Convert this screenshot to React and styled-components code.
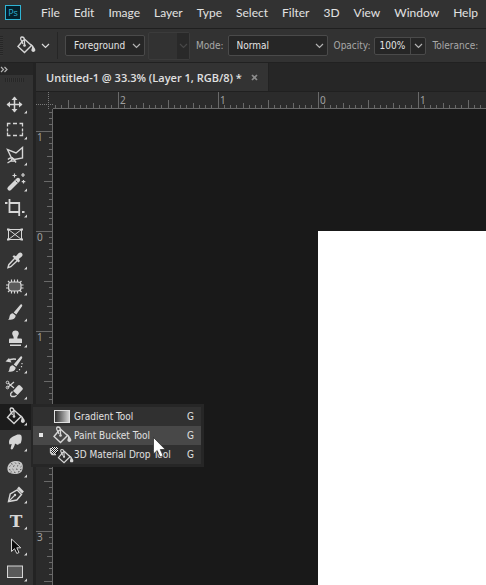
import React, { useEffect, useState } from "react";
import styled, { createGlobalStyle } from "styled-components";

const GlobalStyle = createGlobalStyle`
  * {
    box-sizing: border-box;
  }

  body {
    margin: 0;
    background: #191919;
    color: #dcdcdc;
    font-family: "DejaVu Sans Condensed", "Noto Sans", sans-serif;
    font-size: 10px;
  }

  button,
  input,
  select {
    margin: 0;
    padding: 0;
    border: none;
    background: none;
    color: inherit;
    font: inherit;
  }

  svg {
    display: block;
    flex: none;
  }
`;

const AppFrame = styled.div`
  display: flex;
  flex-direction: column;
  height: 100vh;
  overflow: hidden;
`;

const MenuBar = styled.nav`
  display: flex;
  align-items: center;
  flex: none;
  height: 29px;
  padding-left: 5px;
  background: #323232;
  border-bottom: 1px solid #1f1f1f;
`;

const Logo = styled.span`
  display: flex;
  align-items: center;
  justify-content: center;
  flex: none;
  width: 16px;
  height: 15px;
  margin-right: 20px;
  margin-bottom: 3px;
  border: 1px solid #2fb4d4;
  background: #04202c;
  color: #2fb4d4;
  font-family: "Open Sans", sans-serif;
  font-size: 9px;
  line-height: 12px;
`;

const MenuItems = styled.div`
  display: flex;
  gap: 14px;
  margin-bottom: 3px;
`;

const MenuItem = styled.button`
  color: #e2e2e2;
  font-family: Lato, "Open Sans", sans-serif;
  font-size: 12px;
  line-height: 18px;
  white-space: nowrap;
`;

const OptionsBar = styled.div`
  display: flex;
  align-items: center;
  flex: none;
  height: 34px;
  background: #323232;
  border-bottom: 1px solid #212121;
  white-space: nowrap;
`;

const Grip = styled.span`
  flex: none;
  width: 3px;
  height: 20px;
  margin-right: 13px;
  background: repeating-linear-gradient(#262626 0 1px, #363636 1px 2px);
`;

const ToolPreset = styled.button`
  display: flex;
  align-items: center;
  gap: 5px;
  flex: none;
  width: 42px;
  height: 27px;
  border-right: 1px solid #262626;
`;

const SelectBox = styled.span`
  position: relative;
  display: flex;
  flex: none;
  width: ${(props) => props.$width}px;
  height: 21px;
  margin-left: ${(props) => props.$gap}px;
  border: 1px solid #4a4a4a;
  border-radius: 2px;
  background: #262626;
`;

const Select = styled.select`
  appearance: none;
  width: 100%;
  padding-left: 8px;
  color: #e4e4e4;
`;

const SelectArrow = styled.span`
  position: absolute;
  right: 3px;
  top: 7px;
  color: #b4b4b4;
  pointer-events: none;
`;

const PatternPicker = styled.button`
  display: flex;
  justify-content: flex-end;
  flex: none;
  width: 42px;
  height: 28px;
  margin-left: 3px;
  border: 1px solid #3b3b3b;
  border-radius: 2px;
  color: #484848;
`;

const PatternArrow = styled.span`
  display: flex;
  align-items: center;
  justify-content: center;
  width: 12px;
  background: #292929;
`;

const OptionLabel = styled.label`
  margin-left: 6px;
  color: #a8a8a8;
`;

const NumberBox = styled.span`
  display: flex;
  flex: none;
  width: 52px;
  height: 18px;
  margin-left: 4px;
  border: 1px solid #4a4a4a;
  border-radius: 2px;
  background: #262626;
`;

const NumberInput = styled.input`
  width: 35px;
  padding-left: 4px;
  color: #e4e4e4;
`;

const NumberButton = styled.button`
  display: flex;
  align-items: center;
  justify-content: center;
  flex: 1;
  border-left: 1px solid #4a4a4a;
  color: #b4b4b4;
`;

const Workspace = styled.div`
  display: flex;
  flex: 1;
  min-height: 0;
`;

const Toolbar = styled.aside`
  flex: none;
  width: 36px;
  background: #333333;
  border-right: 3px solid #232323;
`;

const ToolbarHeader = styled.button`
  display: flex;
  align-items: center;
  width: 100%;
  height: 12px;
  background: #262626;
  color: #b4b4b4;
`;

const ToolbarGrip = styled.div`
  width: 19px;
  height: 4px;
  margin: 3px 0 10px 5px;
  background: repeating-linear-gradient(90deg, #272727 0 1px, #363636 1px 2px);
`;

const ToolSlot = styled.div`
  position: relative;
`;

const ToolButton = styled.button`
  display: block;
  width: 100%;
  height: 26px;
  background: ${(props) => (props.$active ? "#1c1c1c" : "transparent")};
`;

const Flyout = styled.div`
  position: absolute;
  z-index: 2;
  left: 31px;
  top: 0;
  width: 173px;
  padding: 3px 3px 3px 2px;
  background: #262626;
`;

const FlyoutItem = styled.button`
  display: flex;
  align-items: center;
  width: 100%;
  height: 19px;
  padding-right: 7px;
  background: ${(props) => (props.$active ? "#484848" : "#303030")};
  color: #e0e0e0;
  text-align: left;
  white-space: nowrap;
`;

const FlyoutMark = styled.span`
  width: 4px;
  height: 4px;
  margin: 0 9px 2px 6px;
  background: ${(props) => (props.$active ? "#e6e6e6" : "transparent")};
`;

const FlyoutName = styled.span`
  flex: 1;
  margin-left: 2px;
`;

const Cursor = styled.svg`
  position: absolute;
  left: 121px;
  top: 32px;
`;

const Editor = styled.main`
  display: flex;
  flex-direction: column;
  flex: 1;
  min-width: 0;
`;

const TabBar = styled.div`
  display: flex;
  flex: none;
  height: 29px;
  background: #262626;
  border-bottom: 1px solid #202020;
`;

const Tab = styled.div`
  display: flex;
  align-items: center;
  gap: 9px;
  padding: 0 10px;
  background: #333333;
  border-right: 1px solid #222222;
  white-space: nowrap;
`;

const TabTitle = styled.span`
  color: #e0e0e0;
  font-family: "Open Sans", sans-serif;
  font-size: 11px;
  font-weight: 600;
`;

const CloseButton = styled.button`
  color: #8c8c8c;
`;

const RulerRow = styled.div`
  display: flex;
  flex: none;
  height: 17px;
`;

const TopRuler = styled.svg`
  flex: 1;
  min-width: 0;
  height: 17px;
  background: #2b2b2b;
  border-bottom: 1px solid #696969;
`;

const RulerCorner = styled.svg`
  background: #2b2b2b;
`;

const CanvasRow = styled.div`
  display: flex;
  flex: 1;
  min-height: 0;
`;

const SideRuler = styled.svg`
  width: 17px;
  height: 100%;
  background: #2b2b2b;
  border-right: 1px solid #696969;
`;

const Canvas = styled.div`
  display: flex;
  flex: 1;
  padding: 122px 0 0 265px;
  background: #191919;
`;

const Page = styled.div`
  flex: 1;
  background: #ffffff;
`;

const RulerText = styled.text`
  fill: #a0a0a0;
  font-family: "Noto Sans", sans-serif;
  font-size: 10px;
`;

const menus = [
  "File",
  "Edit",
  "Image",
  "Layer",
  "Type",
  "Select",
  "Filter",
  "3D",
  "View",
  "Window",
  "Help",
];

const ink = "#d6d6d6";

const Chevron = () => (
  <svg width="9" height="6" viewBox="0 0 9 6" fill="none" stroke="currentColor" strokeWidth="1.2">
    <path d="M1 1l3.5 3.5L8 1" />
  </svg>
);

// Every tool drawing uses the 33x26 area of its button
const BucketShape = () => (
  <g>
    <path d="M12.5 7.5L7.5 13.5l6.5 6L21 12.5l-6.5-6z" fill="none" stroke={ink} strokeWidth="1.4" />
    <path
      d="M14 13V7.5C14 5 12.8 4 11.5 4S9.8 5.2 10.5 6.8L12.5 11"
      fill="none"
      stroke={ink}
      strokeWidth="1.3"
    />
    <circle cx="14" cy="12.5" r="1.3" fill={ink} />
    <path
      d="M18.5 10.5c3 .5 4.500 2 4.800 3.500 1.200 1.500 1.700 2.500 1.500 3.600-.4 1.900-3.600 1.900-3.900 0-.2-1.200.6-2 .6-3.100 0-1.400-1-2.500-3-4z"
      fill={ink}
    />
  </g>
);

const BrushShape = () => (
  <g fill={ink}>
    <path d="M21.8 4.5c.7.5.5 1.200.1 2l-5.600 8-2.600-2 6.200-7.300c.6-.7 1.200-1.100 1.900-.7z" />
    <path d="M12.9 13.3l2.700 2.100c.2 3-2.800 4.600-7.600 4.300 1.600-1 1.100-2.200 1.700-4 .5-1.600 1.800-2.500 3.200-2.400z" />
  </g>
);

const tools = [
  {
    name: "Move Tool",
    art: (
      <g stroke={ink} fill={ink}>
        <path d="M7.500 12.500h14M14.500 5.500v14" strokeWidth="1.500" />
        <path
          d="M14.500 4.500l3 3.500h-6zM14.500 20.500l3-3.500h-6zM6.500 12.500l3.500-3v6zM22.500 12.500l-3.500-3v6z"
          stroke="none"
        />
      </g>
    ),
  },
  {
    name: "Rectangular Marquee Tool",
    art: (
      <path
        d="M7.500 8.500v-3h3M13 5.500h4M19.500 5.500h3v3M22.500 10.500v3M22.500 14.500v3h-3M17 17.500h-4M10.500 17.500h-3v-3M7.500 13.500v-3"
        fill="none"
        stroke={ink}
        strokeWidth="1.300"
      />
    ),
  },
  {
    name: "Polygonal Lasso Tool",
    art: (
      <g fill="none" stroke={ink} strokeWidth="1.400">
        <path d="M11 13L7.500 5.500 16 9l6.500-5.500v10.500L14.500 15.500 11 13z" />
        <path d="M8 15.500c1.500-2 4.500-2 6 0s-1.500 2-3.500 1M12.500 13.500l-1 3-4 2.500M14 15.500l2 3" />
      </g>
    ),
  },
  {
    name: "Magic Wand Tool",
    art: (
      <g stroke={ink}>
        <path d="M9.500 18.500l8.500-8.500" strokeWidth="4.200" strokeLinecap="round" />
        <path d="M15.700 10.600l1.800 1.800" stroke="#454545" />
        <path
          d="M14.500 3.500v4M12.500 5.500h4M23 3v4M21 5h4M23.500 10v3.500M21.700 11.700h3.600"
          strokeWidth="1.200"
        />
      </g>
    ),
  },
  {
    name: "Crop Tool",
    art: (
      <path
        d="M5 7h2.500M9.500 3v13h10M22 16h2.500M9 7h10.200v7M19.200 14v6"
        fill="none"
        stroke={ink}
        strokeWidth="1.800"
      />
    ),
  },
  {
    name: "Frame Tool",
    plain: true,
    art: (
      <g fill="none" stroke={ink}>
        <path d="M8.500 7.500h13v10h-13zM8.500 7.500l13 10M21.500 7.500l-13 10" />
        <path d="M7 7.500h2.500M20.500 7.500h2.500M7 17.500h2.500M20.500 17.500h2.500" strokeWidth="2" />
      </g>
    ),
  },
  {
    name: "Eyedropper Tool",
    art: (
      <g>
        <path
          d="M15 10l2.500 2.500-6.700 6.200-2.800 1 .8-3z"
          fill="none"
          stroke={ink}
          strokeWidth="1.400"
        />
        <path
          d="M12.500 8.500l1.400-1.300 2 1 2.600-3c2.400-2.200 5.500.9 3.300 3.300l-3 2.600 1.200 1.800-1.400 1.500z"
          fill={ink}
        />
      </g>
    ),
  },
  {
    name: "Patch Tool",
    art: (
      <g stroke={ink} strokeWidth="1.200">
        <rect x="8.500" y="8" width="12.500" height="9" rx="3" fill="#5a5a5a" />
        <path d="M11.500 5.500V8M14.500 5.500V8M17.500 5.500V8M11.500 17v2.500M14.500 17v2.500M17.500 17v2.500M6 11h2.500M6 14h2.500M21 11h2.500M21 14h2.500M8 7l1.500 1.500M21.500 7L20 8.500M8 18l1.500-1.500M21.500 18L20 16.500" />
      </g>
    ),
  },
  { name: "Brush Tool", art: <BrushShape /> },
  {
    name: "Clone Stamp Tool",
    art: (
      <g fill={ink}>
        <path d="M15.500 4.500c2 0 3.300 1.300 3.300 3 0 2-1.700 2.500-1.500 5h3.700c1 0 1 .8 1 1.500v3H9v-3c0-.8.200-1.500 1.200-1.500h3.500c.2-2.500-1.500-3-1.500-5 0-1.700 1.300-3 3.300-3z" />
        <path d="M10 18.500h11V20H10z" />
      </g>
    ),
  },
  {
    name: "History Brush Tool",
    art: (
      <g>
        <BrushShape />
        <path d="M8.500 9c1.500-2 4.500-2.200 7.500-1.800" fill="none" stroke={ink} strokeWidth="1.400" />
        <path d="M5.500 9.500l3.500-3.500 2.500 4.500z" fill={ink} />
        <path
          d="M22 11v1.200M21.500 14v1.200M19.500 17v1.200M17 19v1"
          stroke={ink}
          strokeWidth="1.200"
        />
      </g>
    ),
  },
  {
    name: "Background Eraser Tool",
    art: (
      <g>
        <path
          d="M13 13l5-5.500c.8-.8 1.500-.6 2.200 0l2.200 2.300c.6.700.6 1.400 0 2L17.500 17z"
          fill={ink}
        />
        <path
          d="M12.500 13.500L10.700 15.500v2l1 1h3l2-1.200"
          fill="none"
          stroke={ink}
          strokeWidth="1.300"
        />
        <path d="M8 5l6 5M7.500 9.500L14 4" stroke={ink} strokeWidth="1.200" />
        <g fill="none" stroke={ink}>
          <circle cx="7.500" cy="4.500" r="1.300" />
          <circle cx="7.500" cy="9.500" r="1.300" />
        </g>
      </g>
    ),
  },
  { name: "Paint Bucket Tool", active: true, art: <BucketShape /> },
  {
    name: "Smudge Tool",
    art: (
      <path
        d="M9.500 14.500c-1.200-3.500.2-6.500 3.500-8l4.500-2c2-.2 3.500 0 4 1.500.5 2 .2 5-.7 7-.4.8-1.100 1-1.800.5-.3 1.200-1.200 1.700-2.200 1l-1.800-1c-.2 2-1.200 3.800-2.300 5.500-.7 1-2.300.3-2-1l1-4z"
        fill={ink}
      />
    ),
  },
  {
    name: "Sponge Tool",
    art: (
      <g>
        <path
          d="M10 7c3-2.300 8-2.600 11-.8 2.500 2 2.200 6.500.6 9.200-2.500 3-9.500 3.300-12.600 1.200-2.500-2.200-2-7.200 1-9.600z"
          fill="#c6c6c6"
        />
        <g fill="none" stroke="#484848" strokeWidth=".9">
          <path d="M11 7.500l1.500.8M15 6.500l1 1.200M18.500 7l1.500 1M9.500 10.500l1-.8M13 10.500l1.500-.8M17 10.200l1.200-.6M20.500 11l1-.8" />
          <path d="M9 13.500l1.500.6M12.500 13l1 .9M16 13l1.500.4M20 13.800l1.400-.4M10.500 16.200l1.200-.4M14 16l1.500.7M18 16l1.500-.5" />
        </g>
      </g>
    ),
  },
  {
    name: "Pen Tool",
    art: (
      <g fill="none" stroke={ink} strokeWidth="1.400">
        <path d="M8.500 19.500l1.700-7.500 7-4 4.300 4.500-4.700 5.500z" />
        <path d="M8.500 19.500l6-6" strokeWidth="1.100" />
        <circle cx="15" cy="13" r="1.200" fill={ink} stroke="none" />
        <path d="M18 5.500l5 5" strokeWidth="2.600" />
      </g>
    ),
  },
  {
    name: "Type Tool",
    art: (
      <text
        x="16"
        y="18.500"
        textAnchor="middle"
        fill={ink}
        fontFamily="DejaVu Serif, serif"
        fontWeight="bold"
        fontSize="17"
      >
        T
      </text>
    ),
  },
  {
    name: "Path Selection Tool",
    art: (
      <path
        d="M11.500 5v12.500l3-2.800 2.300 4.800 2.200-1-2.200-4.700h4z"
        fill="#0c0c0c"
        stroke={ink}
        strokeWidth="1"
      />
    ),
  },
  {
    name: "Rectangle Tool",
    art: <rect x="7.500" y="6" width="15" height="11.500" fill="#5a5a5a" stroke={ink} />,
  },
];

const GradientArt = () => (
  <svg width="20" height="19" viewBox="0 0 20 19">
    <defs>
      <linearGradient id="swatch">
        <stop offset="0" stopColor="#2a2a2a" />
        <stop offset="1" stopColor="#d8d8d8" />
      </linearGradient>
    </defs>
    <rect x="2.500" y="3.500" width="15" height="12" fill="url(#swatch)" stroke="#e0e0e0" />
  </svg>
);

const BucketArt = () => (
  <svg width="20" height="19" viewBox="5.500 3 20 19">
    <BucketShape />
  </svg>
);

const MaterialArt = () => (
  <svg width="20" height="19" viewBox="0 0 20 19" overflow="visible">
    <rect x="-1" y="2" width="7" height="7" rx="2" fill="#151515" />
    <path
      d="M0 2h1v1h-1zM2 2h1v1h-1zM4 2h1v1h-1zM-1 3h1v1h-1zM1 3h1v1h-1zM3 3h1v1h-1zM5 3h1v1h-1zM0 4h1v1h-1zM2 4h1v1h-1zM4 4h1v1h-1zM-1 5h1v1h-1zM1 5h1v1h-1zM3 5h1v1h-1zM5 5h1v1h-1zM0 6h1v1h-1zM2 6h1v1h-1zM4 6h1v1h-1zM-1 7h1v1h-1zM1 7h1v1h-1zM3 7h1v1h-1zM0 8h1v1h-1zM2 8h1v1h-1z"
      fill="#f0f0f0"
    />
    <path d="M-1.500 3v4.500L0 9.500h4" fill="none" stroke="#c8c8c8" strokeWidth="1.300" />
    <g transform="translate(0 1) scale(.86)">
      <BucketShape />
    </g>
  </svg>
);

const flyoutItems = [
  { name: "Gradient Tool", Art: GradientArt },
  { name: "Paint Bucket Tool", Art: BucketArt },
  { name: "3D Material Drop Tool", Art: MaterialArt },
];

// One unit is 100px, split into sixteenths
const tickPath = (origin, length, size, vertical) => {
  let d = "";
  const first = -Math.floor(origin / 6.25);
  const last = Math.floor((length - origin) / 6.25);
  for (let i = first; i <= last; i += 1) {
    const at = Math.floor(origin + i * 6.25) + 0.5;
    let tick = 3;
    if (i % 16 === 0) tick = size;
    else if (i % 8 === 0) tick = 8;
    else if (i % 4 === 0) tick = 5;
    d += vertical ? `M${size - tick} ${at}h${tick}` : `M${at} ${size - tick}v${tick}`;
  }
  return d;
};

const unitLabels = (origin, length) => {
  const labels = [];
  for (let n = -Math.floor(origin / 100); origin + n * 100 + 12 < length; n += 1) {
    labels.push({ value: Math.abs(n), at: origin + n * 100 });
  }
  return labels;
};

const windowSize = () => ({ width: window.innerWidth, height: window.innerHeight });

const App = () => {
  const [fill, setFill] = useState("Foreground");
  const [mode, setMode] = useState("Normal");
  const [opacity, setOpacity] = useState("100%");
  const [fillTool, setFillTool] = useState("Paint Bucket Tool");
  const [size, setSize] = useState(windowSize);

  useEffect(() => {
    const handleResize = () => setSize(windowSize());
    window.addEventListener("resize", handleResize);
    return () => window.removeEventListener("resize", handleResize);
  }, []);

  // The rulers start after the toolbar and below the three bars
  const across = size.width - 53;
  const down = size.height - 109;

  return (
    <AppFrame>
      <GlobalStyle />
      <MenuBar>
        <Logo>Ps</Logo>
        <MenuItems>
          {menus.map((menu) => (
            <MenuItem key={menu}>{menu}</MenuItem>
          ))}
        </MenuItems>
      </MenuBar>

      <OptionsBar>
        <Grip />
        <ToolPreset aria-label="Tool preset">
          <BucketArt />
          <Chevron />
        </ToolPreset>
        <SelectBox $width={80} $gap={7}>
          <Select aria-label="Fill source" value={fill} onChange={(e) => setFill(e.target.value)}>
            <option>Foreground</option>
            <option>Pattern</option>
          </Select>
          <SelectArrow>
            <Chevron />
          </SelectArrow>
        </SelectBox>
        <PatternPicker disabled aria-label="Pattern picker">
          <PatternArrow>
            <Chevron />
          </PatternArrow>
        </PatternPicker>
        <OptionLabel htmlFor="mode">Mode:</OptionLabel>
        <SelectBox $width={100} $gap={4}>
          <Select id="mode" value={mode} onChange={(e) => setMode(e.target.value)}>
            <option>Normal</option>
            <option>Multiply</option>
          </Select>
          <SelectArrow>
            <Chevron />
          </SelectArrow>
        </SelectBox>
        <OptionLabel htmlFor="opacity">Opacity:</OptionLabel>
        <NumberBox>
          <NumberInput id="opacity" value={opacity} onChange={(e) => setOpacity(e.target.value)} />
          <NumberButton aria-label="Opacity slider">
            <Chevron />
          </NumberButton>
        </NumberBox>
        <OptionLabel as="span">Tolerance:</OptionLabel>
      </OptionsBar>

      <Workspace>
        <Toolbar>
          <ToolbarHeader aria-label="Expand toolbar">
            <svg width="10" height="7" viewBox="0 0 10 7" fill="none" stroke="currentColor">
              <path d="M1 1l2.500 2.500L1 6M4.500 1L7 3.500 4.500 6" strokeWidth="1.200" />
            </svg>
          </ToolbarHeader>
          <ToolbarGrip />
          {tools.map((tool) => (
            <ToolSlot key={tool.name}>
              <ToolButton $active={tool.active} aria-label={tool.name}>
                <svg width="33" height="26" viewBox="0 0 33 26">
                  {tool.art}
                  {!tool.plain && <path d="M27 18.500V21.500H24z" fill={ink} />}
                </svg>
              </ToolButton>
              {tool.active && (
                <Flyout>
                  {flyoutItems.map(({ name, Art }) => (
                    <FlyoutItem
                      key={name}
                      $active={name === fillTool}
                      onClick={() => setFillTool(name)}
                    >
                      <FlyoutMark $active={name === fillTool} />
                      <Art />
                      <FlyoutName>{name}</FlyoutName>
                      <span>G</span>
                    </FlyoutItem>
                  ))}
                  <Cursor width="15" height="23" viewBox="0 0 15 23">
                    <path
                      d="M1.500 1.500v16.500l3.700-3.500 2.800 6.500 3-1.300-2.700-6.200h5z"
                      fill="#ffffff"
                      stroke="#222222"
                      strokeWidth=".7"
                    />
                  </Cursor>
                </Flyout>
              )}
            </ToolSlot>
          ))}
        </Toolbar>

        <Editor>
          <TabBar>
            <Tab>
              <TabTitle>Untitled-1 @ 33.3% (Layer 1, RGB/8) *</TabTitle>
              <CloseButton aria-label="Close document">
                <svg width="7" height="7" viewBox="0 0 7 7" stroke="currentColor">
                  <path d="M1 1l5 5M6 1L1 6" strokeWidth="1.700" />
                </svg>
              </CloseButton>
            </Tab>
          </TabBar>
          <RulerRow>
            <RulerCorner width="17" height="17" viewBox="0 0 17 17">
              <path d="M12.500 0v17M0 12.500h17" stroke="#7a7a7a" strokeDasharray="1 1" />
            </RulerCorner>
            <TopRuler>
              <path d={tickPath(265, across, 16, false)} stroke="#696969" />
              {unitLabels(265, across).map(({ value, at }) => (
                <RulerText key={at} x={at + 2} y="12">
                  {value}
                </RulerText>
              ))}
            </TopRuler>
          </RulerRow>
          <CanvasRow>
            <SideRuler>
              <path d={tickPath(122, down, 16, true)} stroke="#696969" />
              {unitLabels(122, down).map(({ value, at }) => (
                <RulerText key={at} x="1" y={at + 10}>
                  {value}
                </RulerText>
              ))}
            </SideRuler>
            <Canvas>
              <Page />
            </Canvas>
          </CanvasRow>
        </Editor>
      </Workspace>
    </AppFrame>
  );
};

export default App;
